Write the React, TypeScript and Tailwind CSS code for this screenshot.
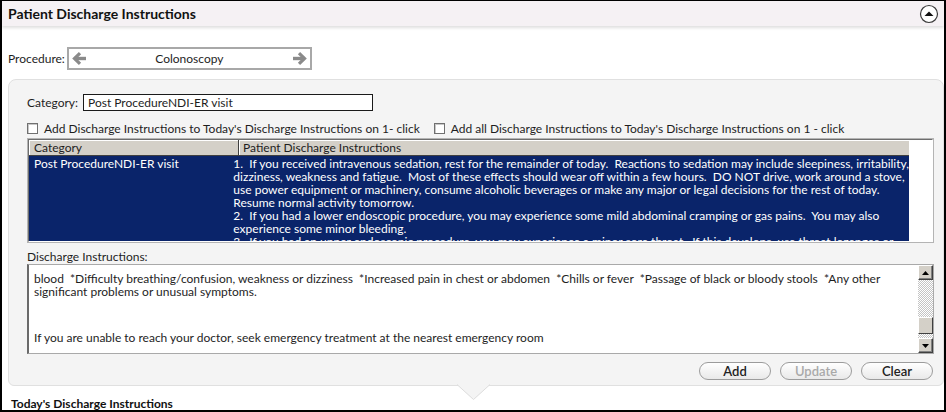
import React from "react";

const rowLines = [
  "1.  If you received intravenous sedation, rest for the remainder of today.  Reactions to sedation may include sleepiness, irritability,",
  "dizziness, weakness and fatigue.  Most of these effects should wear off within a few hours.  DO NOT drive, work around a stove,",
  "use power equipment or machinery, consume alcoholic beverages or make any major or legal decisions for the rest of today.",
  "Resume normal activity tomorrow.",
  "2.  If you had a lower endoscopic procedure, you may experience some mild abdominal cramping or gas pains.  You may also",
  "experience some minor bleeding.",
  "3.  If you had an upper endoscopic procedure, you may experience a minor sore throat.  If this develops, use throat lozenges or",
];

function CollapseIcon() {
  return (
    <svg width="20" height="20" viewBox="0 0 20 20" aria-hidden="true">
      <circle cx="10" cy="10" r="8.5" fill="#fff" stroke="#3a3a3a" strokeWidth="1.2" />
      <path d="M5.5 12L10 7.5L14.5 12Z" fill="#111" />
    </svg>
  );
}

function ArrowIcon({ dir }: { dir: "left" | "right" }) {
  return (
    <svg
      width="15"
      height="13"
      viewBox="0 0 15 13"
      aria-hidden="true"
      className={dir === "right" ? "rotate-180" : ""}
    >
      <path d="M2.5 6.5H14" stroke="#8a8a8a" strokeWidth="3.4" />
      <path d="M8 1.2L2.5 6.5L8 11.8" fill="none" stroke="#8a8a8a" strokeWidth="3.2" />
    </svg>
  );
}

function Checkbox() {
  return (
    <span className="inline-block h-[11px] w-[11px] border border-[#707070] bg-white shadow-[inset_1px_1px_0_#c8c8c8]" />
  );
}

function ScrollButton({ up }: { up?: boolean }) {
  return (
    <div className="flex h-[15px] w-[15px] items-center justify-center border border-t-white border-l-white border-r-[#404040] border-b-[#404040] bg-[#d4d0c8] shadow-[inset_-1px_-1px_0_#808080]">
      <svg width="7" height="4" viewBox="0 0 7 4" aria-hidden="true">
        <path d={up ? "M0 4L3.5 0L7 4Z" : "M0 0L3.5 4L7 0Z"} fill="#000" />
      </svg>
    </div>
  );
}

function PillButton({ label, disabled }: { label: string; disabled?: boolean }) {
  return (
    <button
      type="button"
      className={
        "flex h-[18px] w-[72px] items-center justify-center rounded-full border border-[#9c9c9c] bg-linear-to-b from-white to-[#e9e9e9] text-[13px] font-semibold " +
        (disabled ? "text-[#a9a9a9]" : "text-[#222]")
      }
    >
      {label}
    </button>
  );
}

export default function App() {
  return (
    <div className="relative box-border flex h-[412px] w-[946px] flex-col overflow-hidden border-t border-r-2 border-b-2 border-l-2 border-black bg-white font-['Lato',sans-serif] text-[12px] leading-[13px] text-[#1e1e1e]">
      <div className="flex h-[25px] shrink-0 items-center justify-between bg-[#f5f1f4] pr-[5px] pl-[6px] shadow-[0_2px_3px_rgba(0,0,0,0.13)]">
        <span className="text-[14px] font-bold text-[#111]">Patient Discharge Instructions</span>
        <CollapseIcon />
      </div>

      <div className="mt-[21px] flex items-center pl-[6px]">
        <span className="mr-[2px]">Procedure:</span>
        <div className="flex h-[23px] w-[245px] items-center justify-between border-2 border-[#a8a8a8] px-[3px]">
          <ArrowIcon dir="left" />
          <span>Colonoscopy</span>
          <ArrowIcon dir="right" />
        </div>
      </div>

      <div className="relative mt-[9px] ml-[6px] flex h-[307px] flex-col rounded-t-[8px] rounded-b-[6px] border border-[#e0e0e0] bg-[#f4f4f4] pt-[14px] pr-[9px] pl-[18px]">
        <div className="flex items-center">
          <span className="mr-[5px]">Category:</span>
          <div className="flex h-[17px] w-[290px] items-center border border-[#1a1a1a] bg-white px-[4px]">
            Post ProcedureNDI-ER visit
          </div>
        </div>

        <div className="mt-[10px] flex h-[14px] items-center">
          <Checkbox />
          <span className="ml-[6px]">Add Discharge Instructions to Today's Discharge Instructions on 1- click</span>
          <span className="ml-[14px] flex items-center">
            <Checkbox />
            <span className="ml-[6px]">Add all Discharge Instructions to Today's Discharge Instructions on 1 - click</span>
          </span>
        </div>

        <div className="mt-[3px] h-[105px] border border-[#b4b4b4] bg-white">
          <div className="h-full w-full border border-t-[#6d6d6d] border-l-[#6d6d6d] border-r-white border-b-white">
            <div className="flex h-[103px] w-[880px] flex-col">
              <div className="flex h-[16px] shrink-0 border-b border-[#404040] bg-[#d4d0c8]">
                <div className="flex w-[210px] items-center border-r border-r-[#404040] pl-[5px] shadow-[inset_1px_1px_0_#fff]">
                  Category
                </div>
                <div className="flex flex-1 items-center pl-[4px] shadow-[inset_1px_1px_0_#fff]">
                  Patient Discharge Instructions
                </div>
              </div>
              <div className="flex h-[85px] overflow-hidden bg-[#0a246a] text-white">
                <div className="w-[211px] pt-[1px] pl-[5px]">Post ProcedureNDI-ER visit</div>
                <div className="flex-1 pt-[1px] pl-[4px]">
                  {rowLines.map((line, i) => (
                    <div key={i} className="whitespace-pre">
                      {line}
                    </div>
                  ))}
                </div>
              </div>
            </div>
          </div>
        </div>

        <div className="mt-[6px] flex h-[14px] items-center">Discharge Instructions:</div>

        <div className="mt-[1px] flex h-[90px] border border-[#a9a9a9] border-l-2 border-l-[#6a6a6a] bg-white">
          <div className="flex-1 pt-[7px] pl-[5px]">
            <div className="whitespace-pre">
              blood  *Difficulty breathing/confusion, weakness or dizziness  *Increased pain in chest or abdomen  *Chills or fever  *Passage of black or bloody stools  *Any other
            </div>
            <div>significant problems or unusual symptoms.</div>
            <div className="h-[33px]" />
            <div>If you are unable to reach your doctor, seek emergency treatment at the nearest emergency room</div>
          </div>
          <div className="flex w-[15px] flex-col">
            <ScrollButton up />
            <div className="h-[37px] bg-[repeating-conic-gradient(#c4c4c4_0_25%,#ffffff_0_50%)] bg-[length:2px_2px]" />
            <div className="h-[17px] border border-t-white border-l-white border-r-[#404040] border-b-[#404040] bg-[#d4d0c8]" />
            <div className="h-[4px] bg-[repeating-conic-gradient(#c4c4c4_0_25%,#ffffff_0_50%)] bg-[length:2px_2px]" />
            <ScrollButton />
          </div>
        </div>

        <div className="mt-[8px] flex justify-end gap-[9px] pr-[1px]">
          <PillButton label="Add" />
          <PillButton label="Update" disabled />
          <PillButton label="Clear" />
        </div>

        <svg
          className="absolute bottom-[-16px] left-[448px]"
          width="33"
          height="17"
          viewBox="0 0 33 17"
          aria-hidden="true"
        >
          <path d="M0 0.5L16.5 15.5L33 0.5" fill="#f4f4f4" stroke="#dcdcdc" strokeWidth="1" />
          <rect x="1" y="-1" width="31" height="1.2" fill="#f4f4f4" />
        </svg>
      </div>

      <div className="mt-[11px] pl-[9px] text-[12px] font-bold text-[#111]">Today's Discharge Instructions</div>
    </div>
  );
}
